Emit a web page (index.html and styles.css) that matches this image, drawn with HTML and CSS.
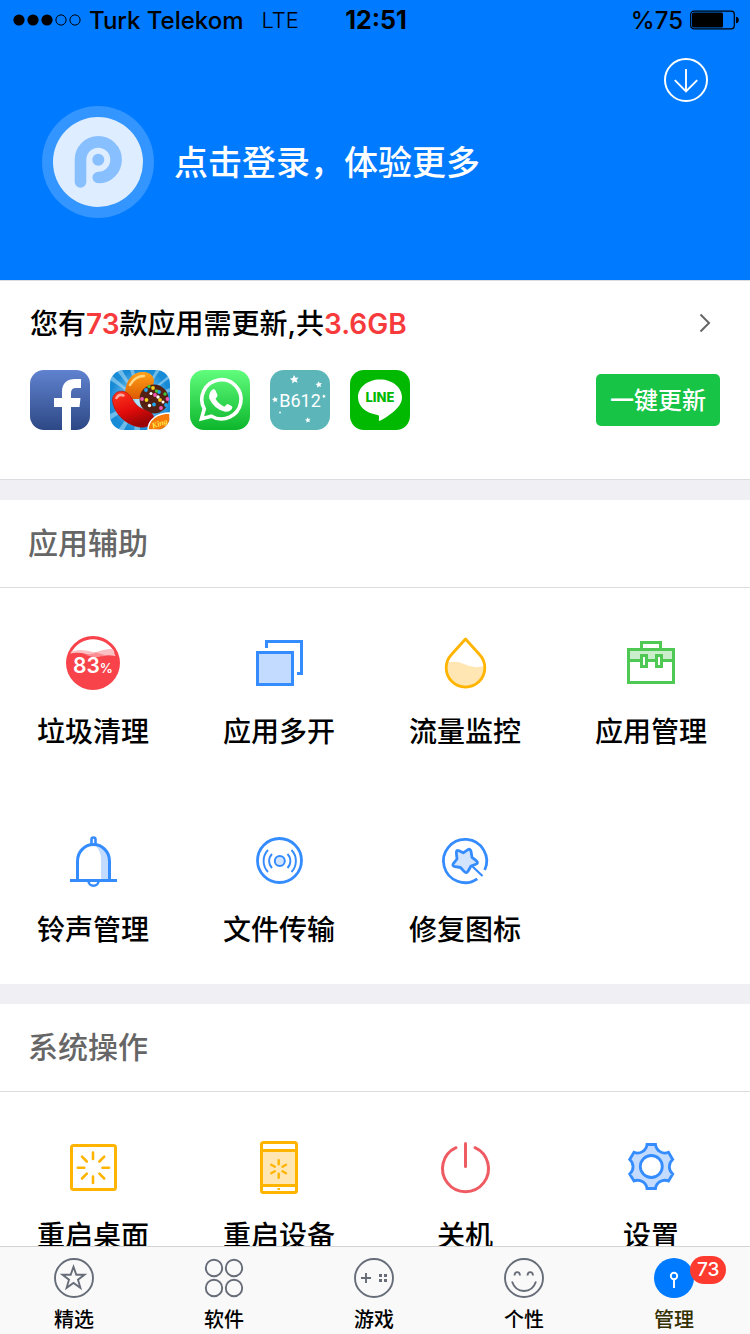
FILE: index.html
```html
<!DOCTYPE html>
<html lang="zh-CN">
<head>
<meta charset="utf-8">
<meta name="viewport" content="width=device-width, initial-scale=1">
<title>管理</title>
<link rel="stylesheet" href="styles.css">
</head>
<body>
<div class="app">
  <header class="hero">
    <div class="status">
      <div class="status-left">
        <svg class="signal" viewBox="0 0 68 12" aria-hidden="true">
          <circle cx="6" cy="6" r="5.6"/><circle cx="20" cy="6" r="5.6"/><circle cx="34" cy="6" r="5.6"/>
          <g fill="none" stroke="#000" stroke-width="1"><circle cx="48" cy="6" r="5.1"/><circle cx="62" cy="6" r="5.1"/></g>
        </svg>
        <span class="carrier">Turk Telekom</span>
        <span class="network">LTE</span>
      </div>
      <time class="clock">12:51</time>
      <div class="status-right">
        <span class="charge">%75</span>
        <svg class="battery" viewBox="0 0 49 20" aria-hidden="true">
          <rect x=".7" y="1.200" width="43.6" height="17.6" rx="3" fill="none" stroke="#000" stroke-width="1.2"/>
          <rect x="2" y="2.500" width="31" height="15" rx="1.5"/>
          <path d="M46 6.700q2.800.5 2.800 3.300t-2.800 3.300z"/>
        </svg>
      </div>
    </div>
    <div class="hero-tools">
      <button class="icon-button" type="button" aria-label="下载">
        <svg viewBox="0 0 44 44" fill="none" stroke="#fff" stroke-width="2"><circle cx="22" cy="22" r="21"/><path d="M22 11V33.500M10.800 22.200L22 33.500 33.200 22.200" stroke-width="1.900"/></svg>
      </button>
    </div>
    <button class="login" type="button">
      <svg class="avatar" viewBox="0 0 112 112" aria-hidden="true">
        <circle cx="56" cy="56" r="56" fill="#3395ff"/>
        <circle cx="56" cy="56" r="45" fill="#deedff"/>
        <path d="M38.500 76V53.700A17.800 17.800 0 1 1 56.300 71.500" fill="none" stroke="#88bfff" stroke-width="11.600" stroke-linecap="round"/>
        <circle cx="56.300" cy="53.700" r="6" fill="#88bfff"/>
      </svg>
      <span class="login-text">点击登录，体验更多</span>
    </button>
  </header>

  <main class="content">
    <section class="updates">
      <a class="updates-link" href="#updates">
        <span class="updates-text">您有<em>73</em>款应用需更新,共<em>3.6GB</em></span>
        <svg class="chevron" viewBox="0 0 12 20" fill="none" stroke="#666" stroke-width="2" aria-hidden="true"><path d="M1.500 1.500L10 10 1.500 18.500"/></svg>
      </a>
      <div class="updates-row">
        <div class="apps">
          <svg class="app-icon" viewBox="0 0 60 60" role="img" aria-label="Facebook">
            <defs><linearGradient id="fb" x2="0" y2="1"><stop stop-color="#6082cf"/><stop offset="1" stop-color="#2d4885"/></linearGradient></defs>
            <rect width="60" height="60" fill="url(#fb)"/>
            <path fill="#fff" d="M32 60V37H24V28H32V22C32 13 37 9 45 9H51V18H46Q41 18 41 23V28H50.500L49.500 37H41V60Z"/>
          </svg>
          <svg class="app-icon" viewBox="0 0 60 60" role="img" aria-label="Candy Crush">
            <defs>
              <radialGradient id="sky"><stop stop-color="#bdeaff"/><stop offset="1" stop-color="#188bd6"/></radialGradient>
              <linearGradient id="rd" x1="0" y1="0" x2=".4" y2="1"><stop stop-color="#ff3b20"/><stop offset=".6" stop-color="#e30b0b"/><stop offset="1" stop-color="#9c0505"/></linearGradient>
              <linearGradient id="or" x2="0" y2="1"><stop stop-color="#ffa21a"/><stop offset="1" stop-color="#dd5a00"/></linearGradient>
            </defs>
            <rect width="60" height="60" fill="url(#sky)"/>
            <path fill="#d4f2ff" opacity=".45" d="M30 30L0 4V10ZM30 30L6 0H12ZM30 30L20 0H24ZM30 30L46 0H50ZM30 30L60 4V8ZM30 30L0 44V50ZM30 30L8 60H14ZM30 30L24 60H30ZM30 30L60 18V22Z"/>
            <path fill="url(#or)" d="M15 23C16 10 22 2 33 2 42 2 46 9 43 15 40 20 33 22 29 29H20Z"/>
            <path d="M20 15Q25 6 34 6" stroke="#ffd884" stroke-width="2.500" fill="none" stroke-linecap="round"/>
            <circle cx="44" cy="29" r="14.500" fill="#542013"/>
            <g fill="#1fa8ef"><circle cx="36" cy="20" r="1.900"/><circle cx="44" cy="34.500" r="1.900"/><circle cx="56" cy="35" r="1.900"/><circle cx="49" cy="22" r="1.900"/></g>
            <g fill="#f4d11d"><circle cx="36.500" cy="30" r="1.900"/><circle cx="50" cy="30" r="1.900"/><circle cx="43" cy="18" r="1.900"/></g>
            <g fill="#f459b8"><circle cx="32" cy="29" r="1.900"/><circle cx="45" cy="25" r="1.900"/><circle cx="57.500" cy="29" r="1.900"/><circle cx="51" cy="38" r="1.900"/></g>
            <g fill="#42c53a"><circle cx="39" cy="16.500" r="1.700"/><circle cx="46.500" cy="21" r="1.700"/><circle cx="55" cy="24" r="1.700"/></g>
            <g fill="#fff"><circle cx="41" cy="23.500" r="1.500"/><circle cx="48" cy="27" r="1.700"/><circle cx="39.500" cy="35.500" r="1.700"/><circle cx="53" cy="32" r="1.500"/></g>
            <path fill="url(#rd)" stroke="#ae0a0a" stroke-width=".6" d="M2.500 31C2 24 8 20 14 21.500 21 23 22 32 29 37 35 41 43 41 44 48 44.500 55 37 58 29 57 15 54.500 4 43 2.500 31Z"/>
            <path d="M6.500 28Q9 23.500 13.500 25.500" stroke="#ffaaa0" stroke-width="2.500" fill="none" stroke-linecap="round"/>
            <path d="M38 60C38 50 47 43 60 43V60Z" fill="#f57a0a" stroke="#fff" stroke-width="1.500"/>
            <text x="42" y="57" transform="rotate(-18 47 55)" class="king">King</text>
          </svg>
          <svg class="app-icon" viewBox="0 0 60 60" role="img" aria-label="WhatsApp">
            <defs><linearGradient id="wa" x2="0" y2="1"><stop stop-color="#61fd7d"/><stop offset="1" stop-color="#0cb62b"/></linearGradient></defs>
            <rect width="60" height="60" fill="url(#wa)"/>
            <path d="M11.500 48.800L14.300 38.800A19.600 19.600 0 1 1 21.500 46.200Z" fill="none" stroke="#fff" stroke-width="3.600"/>
            <path fill="#fff" d="M22.500 19.500Q24.500 18.500 25.500 20.500L27.500 25Q28 26.200 25.500 28.800 28.500 34.300 34.500 36.700 36.800 33.700 37.700 34L42 36.200Q43 37 41.500 39.500 38.500 42.500 34.500 41.500 24 39 19.300 28.500 18.500 22.500 22.500 19.500Z"/>
          </svg>
          <svg class="app-icon" viewBox="0 0 60 60" role="img" aria-label="B612">
            <rect width="60" height="60" fill="#5cb6b9"/>
            <text x="30" y="37" text-anchor="middle" class="b612">B612</text>
            <g fill="#fff"><path id="st" d="M24 5l1.500 2.700 3-.3-2 2.500 1.200 2.900-3-1.200-2.500 2 .2-3.200-2.600-1.700 3-.7z"/><use href="#st" transform="translate(30.500 7.500) scale(.75)"/><use href="#st" transform="translate(-12 23) scale(.7)"/><use href="#st" transform="translate(22 44) scale(.65)"/><use href="#st" transform="translate(43 22) scale(.45)"/><circle cx="10" cy="42.500" r=".9"/></g>
          </svg>
          <svg class="app-icon" viewBox="0 0 60 60" role="img" aria-label="LINE">
            <rect width="60" height="60" fill="#00b900"/>
            <path fill="#fff" d="M30 9.500C42.500 9.500 52 17.500 52 27.300 52 31.500 50.300 35 47 38.300 42.500 43.500 33.500 49.200 30.500 50.600 28.500 51.400 28.800 50 28.900 49.200 29.300 46 29.400 45.300 26.500 44.700 15.500 43.200 8 36.200 8 27.300 8 17.500 17.500 9.500 30 9.500Z"/>
            <text x="30" y="32" text-anchor="middle" class="line">LINE</text>
          </svg>
        </div>
        <button class="update-all" type="button">一键更新</button>
      </div>
    </section>

    <section class="panel">
      <h2 class="panel-title">应用辅助</h2>
      <div class="tools">
        <button class="tool" type="button">
          <svg viewBox="0 0 64 64" aria-hidden="true">
            <circle cx="32" cy="32" r="27" fill="#f8434b"/>
            <path fill="#fff" d="M10.500 21.500A24 24 0 0 1 53.500 21.500Q43 20 32 22 20 18 10.500 21.500Z"/>
            <path fill="#fac0c3" d="M10.500 20.500Q20 17 34 21.500 44 17.500 51.500 18L54.500 25Q44 23 34 26.500 22 20 9 22.500Z"/>
            <path fill="#f98d92" d="M23 23.500Q31 23.500 35 21.500L47 25Q38 24.500 34 26.500Z"/>
            <text x="12" y="42" class="pct">83<tspan class="pct-sign">%</tspan></text>
          </svg>
          <span>垃圾清理</span>
        </button>
        <button class="tool" type="button">
          <svg viewBox="0 0 64 64" fill="none" stroke="#348cff" stroke-width="3" aria-hidden="true"><path d="M19.500 17V10.500H54.500V42.500H50"/><rect x="10.500" y="21.500" width="35" height="32" fill="#c2dbff"/></svg>
          <span>应用多开</span>
        </button>
        <button class="tool" type="button">
          <svg viewBox="0 0 64 64" fill="none" aria-hidden="true"><path fill="#ffe6b3" d="M14 32Q22 29 31 33 41 38 51 35V37A18.500 18.500 0 0 1 14 37Z"/><path stroke="#ffb400" stroke-width="2.800" stroke-linejoin="round" d="M32.500 8L18.500 23.500A19.300 19.300 0 1 0 46.500 23.500Z"/></svg>
          <span>流量监控</span>
        </button>
        <button class="tool" type="button">
          <svg viewBox="0 0 64 64" fill="none" stroke="#4fc953" stroke-width="3" aria-hidden="true"><path d="M22.500 18V11.500H41.500V18"/><path fill="#caeecb" d="M9.500 18.500H54.500V29.500H9.500Z"/><path d="M9.500 29.500V51.500H54.500V29.500"/><path fill="#fff" d="M22.500 24.500H27.500V35.500H22.500ZM37.500 24.500H42.500V35.500H37.500Z"/></svg>
          <span>应用管理</span>
        </button>
        <button class="tool" type="button">
          <svg viewBox="0 0 64 64" fill="none" stroke="#348cff" stroke-width="3" aria-hidden="true"><path fill="#c2dbff" stroke="none" d="M33 16C38 19 40 25 40 30V50H48V31C48 23 41 17 33 16Z"/><path d="M16.500 51V32A16 16.500 0 0 1 48.500 32V51M9 51.500H56"/><path stroke-width="2.600" d="M30.500 15V10.500a2 2 0 0 1 4 0V15M27.500 52a5 4.800 0 0 0 10 0"/></svg>
          <span>铃声管理</span>
        </button>
        <button class="tool" type="button">
          <svg viewBox="0 0 64 64" fill="none" stroke="#348cff" stroke-width="2.800" aria-hidden="true"><circle cx="32.500" cy="31.500" r="22"/><circle cx="32.800" cy="32" r="5" fill="#d3e4ff" stroke-width="2"/><path stroke-width="1.900" d="M25 25A10 10 0 0 0 25 39M21 21A16 16 0 0 0 21 43M40.500 25A10 10 0 0 1 40.500 39M44.500 21A16 16 0 0 1 44.500 43"/></svg>
          <span>文件传输</span>
        </button>
        <button class="tool" type="button">
          <svg viewBox="0 0 64 64" fill="none" stroke="#348cff" stroke-width="2.800" aria-hidden="true"><path d="M51.700 41A21.600 21.600 0 1 0 44.300 49.800"/><path fill="#d3e4ff" d="M30.300 23.800L34.600 20.900Q37.500 19 38.100 22.700L39 28.300 43.200 31.700Q46 34 42.800 35.200L38 37 35.300 41.800Q33.500 45 31.100 42.400L27.500 38.500 22.100 37.600Q18.500 37 20.700 34.200L24 30 23.400 24.300Q23 20.500 25.900 21.800Z" stroke-linejoin="round"/><path stroke-width="2.200" d="M39 37L49.500 47"/></svg>
          <span>修复图标</span>
        </button>
      </div>
    </section>

    <section class="panel">
      <h2 class="panel-title">系统操作</h2>
      <div class="tools">
        <button class="tool" type="button">
          <svg viewBox="0 0 64 64" fill="none" stroke="#ffb400" stroke-width="3" aria-hidden="true"><rect x="10.500" y="10.500" width="44" height="44" rx="2"/><path stroke-width="2.600" stroke-linecap="round" d="M32 17.500V24M32 41.500V48M16.800 32.700H23.300M41.500 32.700H48M21 21.700L25.800 26.500M43.200 21.700L38.400 26.500M21 43.500L25.800 38.700M43.200 43.500L38.400 38.700"/></svg>
          <span>重启桌面</span>
        </button>
        <button class="tool" type="button">
          <svg viewBox="0 0 64 64" fill="none" stroke="#ffb400" stroke-width="3" aria-hidden="true"><rect x="14.500" y="7.500" width="35" height="50" rx="2"/><path fill="#ffe6b3" d="M14.500 15.500H49.500V50.500H14.500Z"/><path stroke-width="2.400" stroke-linecap="round" d="M31.700 25.200V29.300M31.700 38.700V42.800M24.300 29.800L27.800 31.700M39 29.800L35.500 31.700M24.300 38.200L27.800 36.300M39 38.200L35.500 36.300"/><path stroke-width="2" d="M30.500 54H33"/></svg>
          <span>重启设备</span>
        </button>
        <button class="tool" type="button">
          <svg viewBox="0 0 64 64" fill="none" stroke="#ef5b62" stroke-width="3" stroke-linecap="round" aria-hidden="true"><path d="M23 12.700A23 23 0 1 0 42 12.700"/><path d="M32.500 8.500V31.500"/></svg>
          <span>关机</span>
        </button>
        <button class="tool" type="button">
          <svg viewBox="0 0 64 64" stroke="#348cff" stroke-width="2.800" aria-hidden="true"><path fill="#c2dbff" d="M28 9.500H36.500A9.500 9.500 0 0 0 49.500 17.300L53.700 24.500A9.500 9.500 0 0 0 53.700 39L49.500 46A9.500 9.500 0 0 0 36.500 53.500H28A9.500 9.500 0 0 0 15 46L10.700 39A9.500 9.500 0 0 0 10.700 24.500L15 17.300A9.500 9.500 0 0 0 28 9.500Z"/><circle cx="32.300" cy="31.500" r="11" fill="#fff"/></svg>
          <span>设置</span>
        </button>
      </div>
    </section>
  </main>

  <nav class="tabs">
    <a class="tab" href="#featured">
      <svg viewBox="0 0 40 40" fill="none" stroke="#666c78" stroke-width="1.900" aria-hidden="true"><circle cx="20" cy="20" r="19"/><path d="M19.500 8.800L22.300 16.700H30.500L24 21.700 26.400 29.800 19.500 25 12.600 29.800 15 21.700 8.500 16.700H16.700Z"/></svg>
      <span>精选</span>
    </a>
    <a class="tab" href="#software">
      <svg viewBox="0 0 40 40" fill="none" stroke="#666c78" stroke-width="1.900" aria-hidden="true"><circle cx="10" cy="10" r="8.200"/><circle cx="30" cy="10" r="8.200"/><circle cx="10" cy="30" r="8.200"/><circle cx="30" cy="30" r="8.200"/></svg>
      <span>软件</span>
    </a>
    <a class="tab" href="#games">
      <svg viewBox="0 0 40 40" fill="none" stroke="#666c78" stroke-width="1.900" aria-hidden="true"><circle cx="20" cy="20" r="19"/><path d="M7 20H17M12 15V25"/><path stroke="none" fill="#666c78" d="M25 16h3v3h-3zM30 16h3v3h-3zM25 21h3v3h-3zM30 21h3v3h-3z"/></svg>
      <span>游戏</span>
    </a>
    <a class="tab" href="#themes">
      <svg viewBox="0 0 40 40" fill="none" stroke="#666c78" stroke-width="1.900" aria-hidden="true"><circle cx="20" cy="20" r="19"/><path d="M8 23.500C10 29.500 14.500 33 20 33S30 29.500 32 23.500M10.500 17.500C10.800 13 15.700 13 16 17.500M23.500 17.500C23.800 13 28.700 13 29 17.500"/></svg>
      <span>个性</span>
    </a>
    <a class="tab tab-active" href="#manage" aria-current="page">
      <span class="tab-icon">
        <svg viewBox="0 0 40 40" fill="none" stroke="#fff" stroke-width="1.900" aria-hidden="true"><circle cx="20" cy="20" r="20" fill="#007aff" stroke="none"/><circle cx="20" cy="18" r="3.200"/><path d="M20 21V30"/></svg>
        <b class="badge">73</b>
      </span>
      <span>管理</span>
    </a>
  </nav>
</div>
</body>
</html>
```
FILE: styles.css
```css
* {
  box-sizing: border-box;
}

body {
  margin: 0;
  color: #000;
  background: #fff;
  font-family: Inter, "Noto Sans CJK SC", sans-serif;
  font-size: 28px;
}

button {
  padding: 0;
  border: 0;
  color: inherit;
  background: none;
  font: inherit;
  cursor: pointer;
}

a {
  color: inherit;
  text-decoration: none;
}

svg {
  display: block;
  flex: none;
}

.app {
  display: flex;
  flex-direction: column;
  height: 100vh;
}

.hero {
  flex: none;
  padding-bottom: 62px;
  background: #007aff;
}

.status {
  display: grid;
  grid-template-columns: 1fr auto 1fr;
  align-items: center;
  height: 40px;
  padding: 0 11px 0 13px;
  font-size: 24px;
  font-weight: 500;
}

.status-left,
.status-right {
  display: flex;
  align-items: center;
}

.status-right {
  justify-content: flex-end;
  gap: 7px;
}

.signal {
  width: 68px;
  height: 12px;
}

.carrier {
  margin: 0 18px 0 8px;
}

.network {
  font-size: 22px;
  font-weight: 300;
}

.clock {
  font-size: 25px;
  font-weight: 700;
}

.battery {
  width: 49px;
  height: 20px;
}

.hero-tools {
  display: flex;
  justify-content: flex-end;
  padding: 18px 42px 4px;
}

.icon-button svg {
  width: 44px;
  height: 44px;
}

.login {
  display: flex;
  align-items: center;
  gap: 20px;
  margin-left: 42px;
  color: #fff;
  font-size: 34px;
  font-weight: 500;
}

.login-text {
  padding-bottom: 4px;
}

.avatar {
  width: 112px;
  height: 112px;
}

.content {
  flex: 1;
  min-height: 0;
  overflow-y: auto;
  scrollbar-width: none;
  background: #efeff4;
}

.updates {
  padding: 22px 30px 49px;
  border-bottom: 1px solid #dcdce0;
  border-top: 1px solid #dcdce0;
  background: #fff;
}

.updates-link {
  display: flex;
  align-items: center;
  justify-content: space-between;
  height: 40px;
  padding-right: 9px;
  font-weight: 500;
}

.updates-text {
  padding-bottom: 2px;
}

.updates-link em {
  color: #f73a3c;
  font-style: normal;
  font-weight: 600;
}

.chevron {
  width: 12px;
  height: 20px;
}

.updates-row {
  display: flex;
  align-items: center;
  justify-content: space-between;
  margin-top: 27px;
}

.apps {
  display: flex;
  gap: 20px;
}

.app-icon {
  width: 60px;
  height: 60px;
  border-radius: 14px;
}

.king {
  fill: #ffe94a;
  font: italic 700 8px "Liberation Serif", serif;
}

.b612 {
  fill: #fff;
  font: 400 18px Roboto, sans-serif;
}

.line {
  fill: #00b900;
  font: 800 13px Inter, sans-serif;
}

.update-all {
  height: 52px;
  padding: 0 14px 3px;
  border-radius: 5px;
  color: #fff;
  background: #17c445;
  font-size: 24px;
  font-weight: 500;
}

.panel {
  margin-top: 20px;
  background: #fff;
}

.panel-title {
  height: 88px;
  margin: 0;
  padding-left: 28px;
  border-bottom: 1px solid #dcdce0;
  color: #666;
  font-size: 30px;
  font-weight: 500;
  line-height: 86px;
}

.tools {
  display: grid;
  grid-template-columns: repeat(4, 1fr);
  padding-right: 6px;
}

.tool {
  display: flex;
  flex-direction: column;
  align-items: center;
  gap: 17px;
  padding: 43px 0 34px;
  font-weight: 500;
  line-height: 40px;
}

.tool svg {
  width: 64px;
  height: 64px;
}

.pct {
  fill: #fff;
  font: 600 21px Inter, sans-serif;
}

.pct-sign {
  font-size: 13px;
}

.tabs {
  display: grid;
  flex: none;
  grid-template-columns: repeat(5, 1fr);
  padding-top: 11px;
  border-top: 1px solid #d4d4d6;
  background: #f9f9f9;
}

.tab {
  display: flex;
  flex-direction: column;
  align-items: center;
  gap: 8px;
  padding-right: 2px;
  font-size: 20px;
  font-weight: 500;
  line-height: 28px;
}

.tab svg {
  width: 40px;
  height: 40px;
}

.tab-active {
  color: #353000;
}

.tab-icon {
  position: relative;
}

.badge {
  position: absolute;
  top: -2px;
  left: 36px;
  padding: 0 7px;
  border-radius: 14px;
  color: #fff;
  background: #ff3b30;
  font-size: 19px;
  font-weight: 500;
}
```
